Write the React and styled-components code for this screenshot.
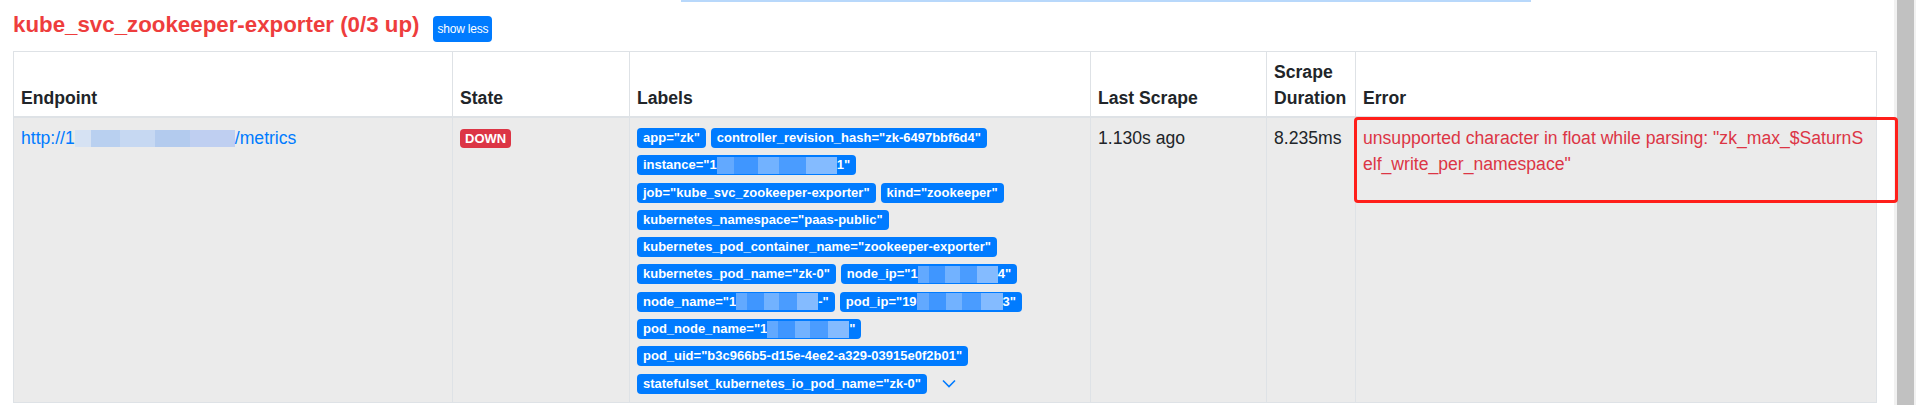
import React from 'react'
import styled, { createGlobalStyle } from 'styled-components'

const GlobalStyle = createGlobalStyle`
    html, body {
        margin: 0;
        padding: 0;
        background: #fff;
        overflow: hidden;
    }
    body {
        font-family: "Liberation Sans", Arial, sans-serif;
        font-size: 17.6px;
        line-height: 26px;
        color: #212529;
    }
`

const labels = [
    ['app', 'zk'],
    ['controller_revision_hash', 'zk-6497bbf6d4'],
    ['instance', '1', 120, '1'],
    ['job', 'kube_svc_zookeeper-exporter'],
    ['kind', 'zookeeper'],
    ['kubernetes_namespace', 'paas-public'],
    ['kubernetes_pod_container_name', 'zookeeper-exporter'],
    ['kubernetes_pod_name', 'zk-0'],
    ['node_ip', '1', 80, '4'],
    ['node_name', '1', 82, '-'],
    ['pod_ip', '19', 86, '3'],
    ['pod_node_name', '1', 82, ''],
    ['pod_uid', 'b3c966b5-d15e-4ee2-a329-03915e0f2b01'],
    ['statefulset_kubernetes_io_pod_name', 'zk-0'],
]

function Label({name, before, blur, after}) {
    return (
        <Badge>
            {name}="{before}
            {blur ? <Blur style={{width: blur}} /> : null}
            {after}"
        </Badge>
    )
}

function App() {
    return (
        <Page>
            <GlobalStyle />
            <Main>
                <TopRule />
                <TitleRow>
                    <Title>kube_svc_zookeeper-exporter (0/3 up)</Title>
                    <ToggleButton>show less</ToggleButton>
                </TitleRow>
                <Table>
                    <colgroup>
                        <col style={{width: 439}} />
                        <col style={{width: 177}} />
                        <col style={{width: 461}} />
                        <col style={{width: 176}} />
                        <col style={{width: 89}} />
                        <col />
                    </colgroup>
                    <thead>
                        <tr>
                            <Th>Endpoint</Th>
                            <Th>State</Th>
                            <Th>Labels</Th>
                            <Th>Last Scrape</Th>
                            <Th>Scrape Duration</Th>
                            <Th>Error</Th>
                        </tr>
                    </thead>
                    <tbody>
                        <Row>
                            <Td>
                                <Link href="#">
                                    http://1<Blur $light style={{width: 160}} />/metrics
                                </Link>
                            </Td>
                            <Td>
                                <StateBadge>DOWN</StateBadge>
                            </Td>
                            <Td>
                                <LabelList>
                                    {labels.map(([name, before, blur, after]) => (
                                        <Label key={name} name={name} before={before} blur={blur} after={after} />
                                    ))}
                                    <Chevron width="14" height="9" viewBox="0 0 14 9">
                                        <path d="M1 1.5 L7 7.5 L13 1.5" fill="none" stroke="#007bff" strokeWidth="1.6" />
                                    </Chevron>
                                </LabelList>
                            </Td>
                            <Td>1.130s ago</Td>
                            <Td>8.235ms</Td>
                            <ErrorCell>
                                unsupported character in float while parsing: "zk_max_$SaturnSelf_write_per_namespace"
                            </ErrorCell>
                        </Row>
                    </tbody>
                </Table>
            </Main>
            <Scrollbar>
                <Thumb />
            </Scrollbar>
        </Page>
    )
}

const Page = styled.div`
    display: flex;
    height: 405px;
    overflow: hidden;
`

const Main = styled.div`
    flex: 1;
    min-width: 0;
    padding: 0 17px 0 13px;
`

const TopRule = styled.div`
    height: 2px;
    width: 850px;
    margin-left: 668px;
    background: #b8d8fb;
`

const TitleRow = styled.div`
    display: flex;
    align-items: flex-start;
    gap: 14px;
    height: 49px;
    box-sizing: border-box;
    padding-top: 10px;
`

const Title = styled.h2`
    margin: 0;
    font-size: 22.3px;
    line-height: 26px;
    font-weight: 700;
    color: #ee3d3d;
`

const ToggleButton = styled.button`
    margin-top: 4px;
    height: 26px;
    padding: 0 4px;
    border: none;
    border-radius: 4px;
    background: #007bff;
    color: #fff;
    font-family: inherit;
    font-size: 12px;
    line-height: 26px;
    letter-spacing: -0.2px;
`

const Table = styled.table`
    width: 100%;
    table-layout: fixed;
    border-collapse: collapse;
    border: 1px solid #dee2e6;
`

const Th = styled.th`
    text-align: left;
    vertical-align: bottom;
    padding: 7px 7px 5px;
    font-weight: 700;
    border: 1px solid #dee2e6;
    border-bottom: 2px solid #dee2e6;
`

const Row = styled.tr`
    background: #ebebeb;
`

const Td = styled.td`
    vertical-align: top;
    padding: 7px 7px 8px;
    border: 1px solid #dee2e6;
`

const ErrorCell = styled(Td)`
    position: relative;
    color: #dc3545;
    word-break: break-all;

    &::after {
        content: "";
        position: absolute;
        left: -2px;
        top: -1px;
        width: 544px;
        height: 86px;
        box-sizing: border-box;
        border: 3px solid #ff1f1a;
        border-radius: 4px;
    }
`

const Link = styled.a`
    color: #007bff;
    text-decoration: none;
`

const Blur = styled.span`
    display: inline-block;
    height: 17px;
    vertical-align: -3px;
    background: ${p => p.$light
        ? 'linear-gradient(90deg, #d6e2f3 0 10%, #b9d0f0 10% 28%, #c6d8f2 28% 50%, #b3cbee 50% 72%, #bfcff1 72% 100%)'
        : 'linear-gradient(90deg, #62a9ff 0 14%, #3f96ff 14% 34%, #72b2ff 34% 52%, #4a9cff 52% 74%, #84bbff 74% 100%)'};
`

const StateBadge = styled.span`
    display: inline-block;
    margin-top: 4px;
    padding: 0 5px;
    height: 19px;
    line-height: 19px;
    border-radius: 4px;
    background: #dc3545;
    color: #fff;
    font-size: 13px;
    font-weight: 700;
    vertical-align: top;
`

const LabelList = styled.div`
    display: flex;
    flex-wrap: wrap;
    align-items: center;
    column-gap: 5px;
    row-gap: 7.3px;
    margin-top: 3px;
    padding-right: 20px;
`

const Badge = styled.span`
    display: inline-flex;
    align-items: center;
    height: 20px;
    padding: 0 6px;
    border-radius: 4px;
    background: #007bff;
    color: #fff;
    font-size: 13px;
    font-weight: 700;
    white-space: nowrap;
`

const Chevron = styled.svg`
    margin-left: 10px;
`

const Scrollbar = styled.div`
    width: 22px;
    padding: 0 2px 0 3px;
    box-sizing: border-box;
    background: #f1f1f1;
`

const Thumb = styled.div`
    height: 100%;
    background: #c1c1c1;
`

export default App
